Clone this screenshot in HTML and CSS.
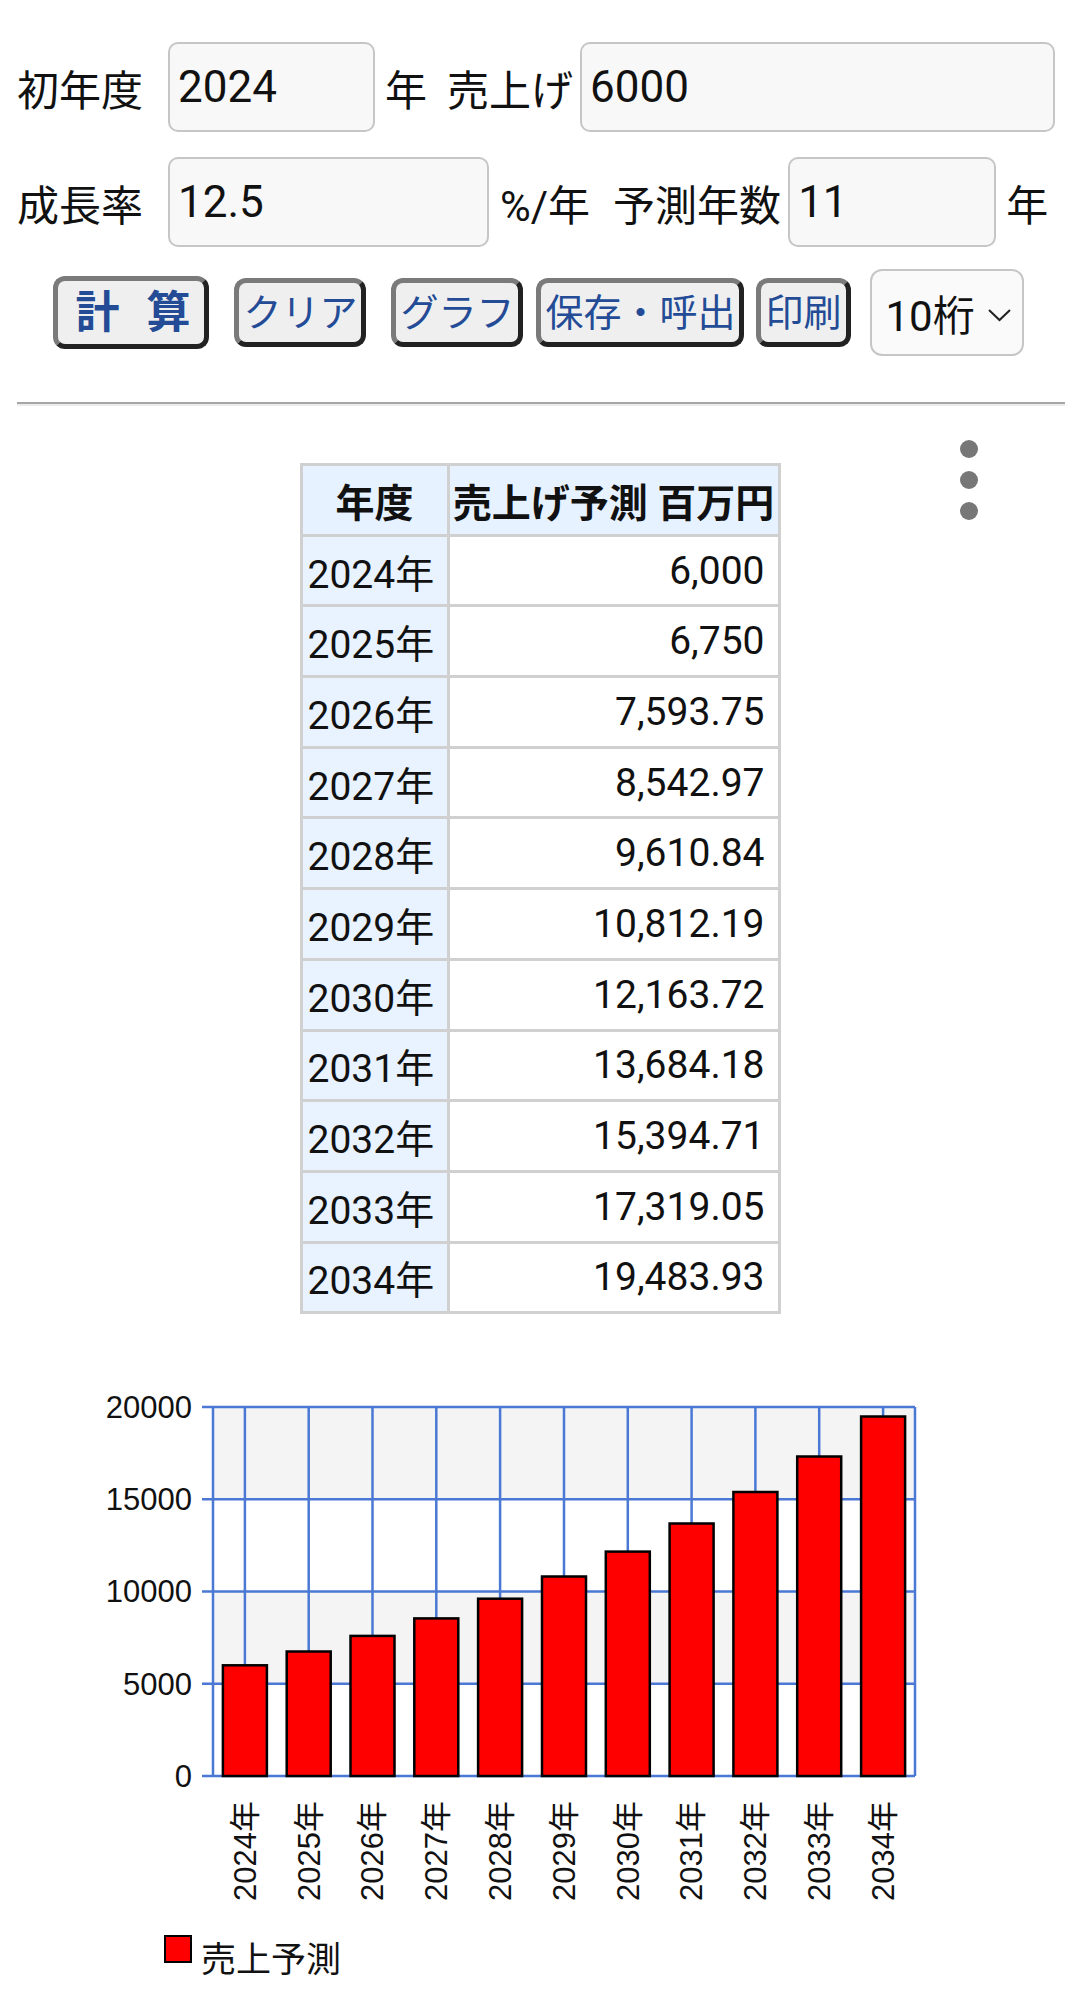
FILE: index.html
```html
<!DOCTYPE html>
<html lang="ja">
<head>
    <meta charset="UTF-8">
    <meta name="viewport" content="width=device-width, initial-scale=1.0">
    <title>売上げ予測</title>
    <link rel="stylesheet" href="styles.css">
</head>
<body>
    <div class="form">
        <div class="row">
            <span class="label">初年度</span>
            <input class="field field-year" type="text" value="2024">
            <span class="unit">年</span>
            <span class="label label-sales">売上げ</span>
            <input class="field field-sales" type="text" value="6000">
        </div>
        <div class="row">
            <span class="label">成長率</span>
            <input class="field field-rate" type="text" value="12.5">
            <span class="unit unit-rate">%/年</span>
            <span class="label label-years">予測年数</span>
            <input class="field field-years" type="text" value="11">
            <span class="unit">年</span>
        </div>
        <div class="buttons">
            <button class="btn btn-calc">計 算</button>
            <button class="btn btn-wide">クリア</button>
            <button class="btn btn-wide">グラフ</button>
            <button class="btn btn-near">保存・呼出</button>
            <button class="btn btn-near">印刷</button>
            <div class="select">
                <span>10桁</span>
                <svg class="chevron" width="25" height="14" viewBox="0 0 25 14">
                    <polyline points="2,2 12.5,12 23,2" fill="none" stroke="#222" stroke-width="2"/>
                </svg>
            </div>
        </div>
        <hr class="divider">
    </div>

    <div class="result">
        <div class="more">
            <span class="dot"></span>
            <span class="dot"></span>
            <span class="dot"></span>
        </div>

        <table class="forecast">
            <tr>
                <th class="col-year">年度</th>
                <th class="col-amount">売上げ予測 百万円</th>
            </tr>
            <tr><td class="year">2024年</td><td class="amount">6,000</td></tr>
            <tr><td class="year">2025年</td><td class="amount">6,750</td></tr>
            <tr><td class="year">2026年</td><td class="amount">7,593.75</td></tr>
            <tr><td class="year">2027年</td><td class="amount">8,542.97</td></tr>
            <tr><td class="year">2028年</td><td class="amount">9,610.84</td></tr>
            <tr><td class="year">2029年</td><td class="amount">10,812.19</td></tr>
            <tr><td class="year">2030年</td><td class="amount">12,163.72</td></tr>
            <tr><td class="year">2031年</td><td class="amount">13,684.18</td></tr>
            <tr><td class="year">2032年</td><td class="amount">15,394.71</td></tr>
            <tr><td class="year">2033年</td><td class="amount">17,319.05</td></tr>
            <tr><td class="year">2034年</td><td class="amount">19,483.93</td></tr>
        </table>

        <!-- グラフ -->
        <svg class="chart" width="1080" height="620" viewBox="0 0 1080 620">
            <rect x="213" y="33" width="702" height="92.25" fill="#f4f4f4"/>
            <rect x="213" y="217.5" width="702" height="92.25" fill="#f4f4f4"/>

            <g stroke="#4a78d4" stroke-width="2.5">
                <line x1="202" y1="33" x2="915" y2="33"/>
                <line x1="202" y1="125.25" x2="915" y2="125.25"/>
                <line x1="202" y1="217.5" x2="915" y2="217.5"/>
                <line x1="202" y1="309.75" x2="915" y2="309.75"/>
                <line x1="202" y1="402" x2="915" y2="402"/>
                <line x1="213" y1="33" x2="213" y2="402"/>
                <line x1="915" y1="33" x2="915" y2="402"/>
                <line x1="244.9" y1="33" x2="244.9" y2="402"/>
                <line x1="308.7" y1="33" x2="308.7" y2="402"/>
                <line x1="372.5" y1="33" x2="372.5" y2="402"/>
                <line x1="436.3" y1="33" x2="436.3" y2="402"/>
                <line x1="500.1" y1="33" x2="500.1" y2="402"/>
                <line x1="564.0" y1="33" x2="564.0" y2="402"/>
                <line x1="627.8" y1="33" x2="627.8" y2="402"/>
                <line x1="691.6" y1="33" x2="691.6" y2="402"/>
                <line x1="755.4" y1="33" x2="755.4" y2="402"/>
                <line x1="819.2" y1="33" x2="819.2" y2="402"/>
                <line x1="883.1" y1="33" x2="883.1" y2="402"/>
            </g>

            <g class="axis-y" text-anchor="end">
                <text x="192" y="44">20000</text>
                <text x="192" y="136">15000</text>
                <text x="192" y="228">10000</text>
                <text x="192" y="321">5000</text>
                <text x="192" y="413">0</text>
            </g>

            <g fill="#ff0000" stroke="#000" stroke-width="2.5">
                <rect x="222.9" y="291.3" width="44" height="110.7"/>
                <rect x="286.7" y="277.5" width="44" height="124.5"/>
                <rect x="350.5" y="261.9" width="44" height="140.1"/>
                <rect x="414.3" y="244.4" width="44" height="157.6"/>
                <rect x="478.1" y="224.7" width="44" height="177.3"/>
                <rect x="542.0" y="202.5" width="44" height="199.5"/>
                <rect x="605.8" y="177.6" width="44" height="224.4"/>
                <rect x="669.6" y="149.5" width="44" height="252.5"/>
                <rect x="733.4" y="118.0" width="44" height="284.0"/>
                <rect x="797.2" y="82.5" width="44" height="319.5"/>
                <rect x="861.1" y="42.5" width="44" height="359.5"/>
            </g>

            <g class="axis-x" text-anchor="end">
                <text transform="translate(244.9 427) rotate(-90)" dy="0.35em">2024年</text>
                <text transform="translate(308.7 427) rotate(-90)" dy="0.35em">2025年</text>
                <text transform="translate(372.5 427) rotate(-90)" dy="0.35em">2026年</text>
                <text transform="translate(436.3 427) rotate(-90)" dy="0.35em">2027年</text>
                <text transform="translate(500.1 427) rotate(-90)" dy="0.35em">2028年</text>
                <text transform="translate(564.0 427) rotate(-90)" dy="0.35em">2029年</text>
                <text transform="translate(627.8 427) rotate(-90)" dy="0.35em">2030年</text>
                <text transform="translate(691.6 427) rotate(-90)" dy="0.35em">2031年</text>
                <text transform="translate(755.4 427) rotate(-90)" dy="0.35em">2032年</text>
                <text transform="translate(819.2 427) rotate(-90)" dy="0.35em">2033年</text>
                <text transform="translate(883.1 427) rotate(-90)" dy="0.35em">2034年</text>
            </g>

            <rect x="165" y="562" width="26" height="26" fill="#ff0000" stroke="#000" stroke-width="2"/>
            <text class="legend" x="201" y="598">売上予測</text>
        </svg>
    </div>
</body>
</html>
```

FILE: styles.css
```css
body {
    font-family: Roboto, "Noto Sans CJK JP", sans-serif;
    margin: 0;
    padding: 0;
    background-color: #fff;
    color: #111;
}

.form {
    padding: 42px 15px 0 17px;
}

.row {
    display: flex;
    align-items: center;
    height: 90px;
    margin-bottom: 25px;
    font-size: 42px;
}

.label {
    margin-right: 25px;
    white-space: nowrap;
}

.label-sales {
    margin-left: 20px;
    margin-right: 7px;
}

.label-years {
    margin-left: 23px;
    margin-right: 7px;
}

.unit {
    margin-left: 10px;
    white-space: nowrap;
}

.unit-rate {
    margin-left: 11px;
}

.field {
    box-sizing: border-box;
    height: 90px;
    padding: 0 0 0 8px;
    font-family: Roboto, "Noto Sans CJK JP", sans-serif;
    font-size: 44px;
    color: #111;
    background-color: #f8f8f8;
    border: 2px solid #c6c6c6;
    border-radius: 10px;
    outline: none;
}

.field-year {
    width: 207px;
}

.field-sales {
    width: 475px;
}

.field-rate {
    width: 321px;
}

.field-years {
    width: 208px;
}

.buttons {
    display: flex;
    align-items: center;
    justify-content: center;
    margin-top: -3px;
    padding-right: 6px;
}

.btn {
    box-sizing: border-box;
    height: 69px;
    padding: 0 4px;
    font-family: Roboto, "Noto Sans CJK JP", sans-serif;
    font-size: 38px;
    line-height: 1;
    color: #234b96;
    background-color: #efefef;
    border: 5px solid;
    border-color: #7a7a7a #222 #222 #7a7a7a;
    border-radius: 12px;
    cursor: pointer;
}

.btn-calc {
    height: 73px;
    padding: 0 6px 0 18px;
    margin-right: 25px;
    font-size: 44px;
    font-weight: bold;
    letter-spacing: 8px;
}

.btn-wide {
    margin-right: 25px;
}

.btn-wide + .btn-wide {
    margin-right: 13px;
}

.btn-near {
    margin-right: 12px;
}

.btn-near + .btn-near {
    margin-right: 19px;
}

.select {
    box-sizing: border-box;
    display: flex;
    align-items: center;
    width: 154px;
    height: 87px;
    padding: 0 0 0 14px;
    font-size: 42px;
    background-color: #fafafa;
    border: 2px solid #c6c6c6;
    border-radius: 12px;
}

.chevron {
    margin-left: 12px;
    margin-top: 4px;
}

.divider {
    margin: 46px 0 0 0;
    border: none;
    border-top: 2px solid #a6a6a6;
    border-bottom: 2px solid #ececec;
}

.result {
    position: relative;
    padding-top: 57px;
}

.more {
    position: absolute;
    top: 34px;
    right: 102px;
    display: flex;
    flex-direction: column;
    gap: 13px;
}

.dot {
    width: 18px;
    height: 18px;
    border-radius: 50%;
    background-color: #777;
}

.forecast {
    margin: 0 auto;
    border-collapse: collapse;
    table-layout: fixed;
    font-size: 39px;
}

.forecast th,
.forecast td {
    height: 67.7px;
    padding: 0;
    border: 3px solid #d0d0d0;
}

.forecast th {
    background-color: #e6f2ff;
    font-weight: bold;
    white-space: nowrap;
}

.col-year {
    width: 144px;
}

.col-amount {
    width: 328px;
}

.forecast .year {
    background-color: #e8f3ff;
    padding-left: 5px;
}

.forecast .amount {
    text-align: right;
    padding-right: 13px;
    background-color: #fff;
}

.chart {
    display: block;
    margin-top: 60px;
}

.chart text {
    font-family: "Liberation Sans", "Noto Sans CJK JP", sans-serif;
    fill: #111;
}

.axis-y text {
    font-size: 31px;
}

.axis-x text {
    font-size: 31px;
}

.legend {
    font-size: 35px;
}
```
